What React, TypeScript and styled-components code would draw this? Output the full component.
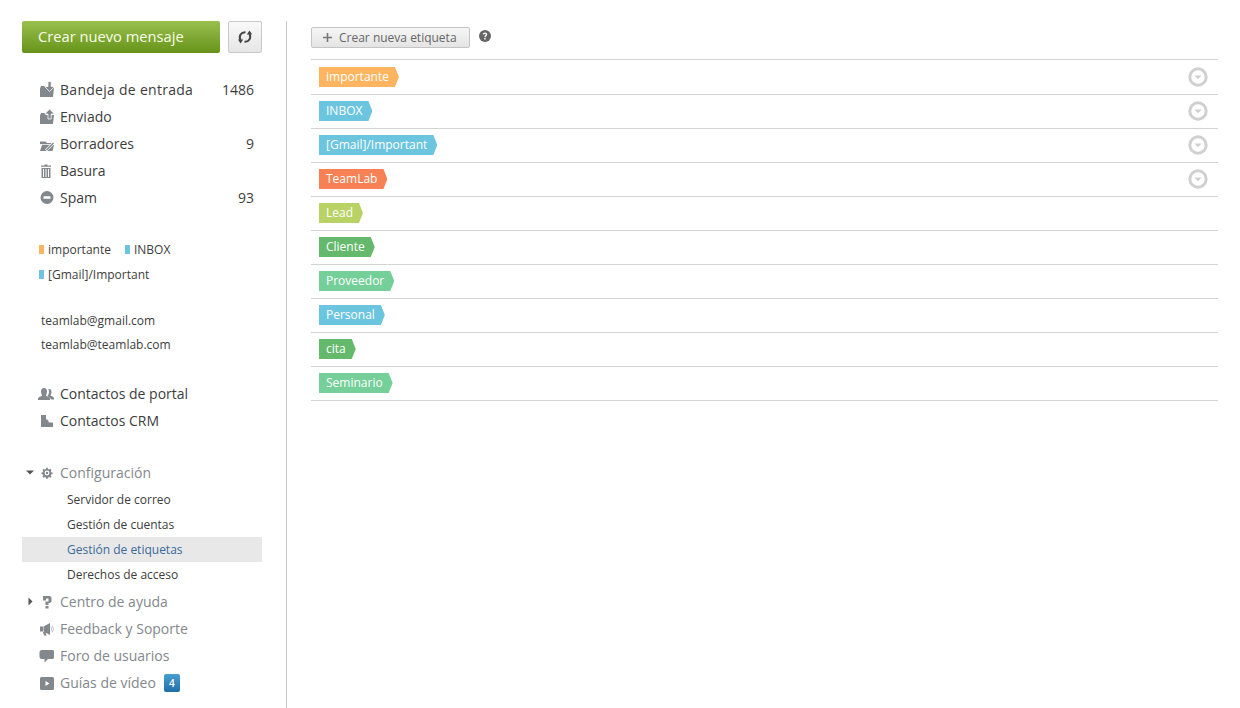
import React from "react";
import styled, { createGlobalStyle } from "styled-components";

const Global = createGlobalStyle`
  html, body { margin: 0; padding: 0; background: #fff; }
  body { font-family: "Open Sans", "Liberation Sans", sans-serif; color: #3d3d3d; }
`;

const Page = styled.div`
  display: flex;
  width: 1240px;
  height: 708px;
  overflow: hidden;
  box-sizing: border-box;
  padding: 21px 22px 0;
`;

const Sidebar = styled.aside`
  width: 240px;
  flex: none;
  display: flex;
  flex-direction: column;
`;

const Divider = styled.div`
  width: 1px;
  flex: none;
  margin: 0 24px;
  background: #c9c9c9;
`;

const Main = styled.main`
  flex: 1;
  min-width: 0;
`;

const Actions = styled.div`
  display: flex;
  gap: 8px;
  margin-bottom: 23px;
`;

const CreateButton = styled.button`
  width: 198px;
  height: 32px;
  border: 0;
  border-radius: 2px;
  padding: 0 0 3px 16px;
  text-align: left;
  color: #fafde8;
  font: 14.7px "Open Sans", sans-serif;
  background: linear-gradient(#99c04f, #669319);
`;

const RefreshButton = styled.button`
  width: 34px;
  height: 32px;
  box-sizing: border-box;
  border: 1px solid #c9c9c9;
  border-radius: 2px;
  padding: 0;
  display: flex;
  align-items: center;
  justify-content: center;
  background: linear-gradient(#f9f9f9, #e6e6e6);
`;

const NavRow = styled.div<{ $muted?: boolean }>`
  position: relative;
  height: 27px;
  display: flex;
  align-items: center;
  padding: 0 8px 0 38px;
  font-size: 14px;
  color: ${(p) => (p.$muted ? "#83888d" : "#3d3d3d")};
`;

const Label = styled.span<{ $spacing?: number }>`
  letter-spacing: ${(p) => p.$spacing ?? 0}px;
`;

const NavIcon = styled.svg`
  position: absolute;
  left: 16px;
  top: 5px;
  width: 16px;
  height: 16px;
  fill: #83888d;
`;

const Count = styled.span`
  margin-left: auto;
  font-size: 14px;
  margin-top: -1px;
`;

const Section = styled.div<{ $top: number }>`
  margin-top: ${(p) => p.$top}px;
`;

const SubList = styled.div`
  padding: 1px 0;
`;

const TagLine = styled.div`
  display: flex;
  height: 25px;
  align-items: center;
  padding-left: 17px;
  gap: 14px;
  font-size: 12px;
`;

const MiniTag = styled.span<{ $color: string }>`
  display: inline-flex;
  align-items: center;
  gap: 4px;
  &::before {
    content: "";
    width: 5px;
    height: 9px;
    background: ${(p) => p.$color};
  }
`;

const Account = styled.div`
  height: 24px;
  line-height: 23px;
  padding-left: 19px;
  font-size: 12px;
`;

const SubItem = styled.div<{ $active?: boolean }>`
  height: 25px;
  line-height: 25px;
  padding-left: 45px;
  font-size: 12px;
  color: ${(p) => (p.$active ? "#3a6a9a" : "#3d3d3d")};
  background: ${(p) => (p.$active ? "#e8e8e8" : "transparent")};
`;

const Caret = styled.svg`
  position: absolute;
  left: 4px;
  top: 9px;
  width: 9px;
  height: 9px;
  fill: #555;
`;

const Badge = styled.span`
  margin-left: 8px;
  width: 16px;
  height: 18px;
  border-radius: 2px;
  display: flex;
  align-items: center;
  justify-content: center;
  font-size: 10px;
  font-weight: 600;
  color: #fff;
  background: linear-gradient(#4a9ed0, #1f6fa8);
`;

const Toolbar = styled.div`
  display: flex;
  align-items: flex-start;
  height: 38px;
  padding-top: 6px;
  box-sizing: border-box;
  gap: 9px;
`;

const NewLabelButton = styled.button`
  width: 159px;
  height: 21px;
  box-sizing: border-box;
  border: 1px solid #c4c4c4;
  border-radius: 2px;
  padding: 0 0 0 11px;
  display: flex;
  align-items: center;
  gap: 7px;
  font: 12px "Open Sans", sans-serif;
  color: #666;
  background: linear-gradient(#f6f6f6, #e4e4e4);
`;

const HelpIcon = styled.svg`
  margin-top: 3px;
`;

const List = styled.div`
  border-top: 1px solid #d4d4d4;
`;

const Row = styled.div`
  display: flex;
  align-items: flex-start;
  justify-content: space-between;
  height: 20px;
  padding: 6px 10px 7px 8px;
  border-bottom: 1px solid #d4d4d4;
  &:first-child {
    padding-top: 7px;
  }
`;

const Tag = styled.span<{ $color: string }>`
  height: 20px;
  line-height: 20px;
  padding: 0 10px 0 7px;
  font-size: 12px;
  color: #fff;
  background: ${(p) => p.$color};
  clip-path: polygon(0 0, calc(100% - 4px) 0, 100% 50%, calc(100% - 4px) 100%, 0 100%);
`;

const Menu = styled.svg`
  width: 20px;
  height: 20px;
  flex: none;
`;

const folder = "M2 7.500L3 5h4l1 2h8l-1 9H2z";

const icons: Record<string, React.ReactNode> = {
  inbox: (
    <>
      <path d={folder} />
      <path d="M10 .500h3.200v5h3.300l-4.900 5-4.900-5H10z" stroke="#fff" strokeWidth=".8" />
    </>
  ),
  sent: (
    <>
      <path d={folder} />
      <path d="M10 11V6H6.700l4.900-5 4.900 5h-3.300v5z" stroke="#fff" strokeWidth=".8" />
    </>
  ),
  drafts: (
    <>
      <path d="M2 9V6.500h5.500L9 8h5v1.200H4z" />
      <path d="M4 10h12l-1.500 6H2z" />
      <path d="M8 15.500l7-7" stroke="#fff" strokeWidth="2.600" fill="none" />
      <path d="M8.500 15l7-7" stroke="#83888d" strokeWidth="1.400" fill="none" />
    </>
  ),
  trash: (
    <path
      d="M6.500 2.500h3v1h3.500v1.200H3V3.500h3.500zM3.500 6h9v10h-9zM5 7v8h1V7zM7.500 7v8h1V7zM10 7v8h1V7z"
      fillRule="evenodd"
    />
  ),
  spam: <path d="M9 2a6.500 6.500 0 1 0 0 13 6.500 6.500 0 0 0 0-13zM5.500 7.300h7v2.400h-7z" fillRule="evenodd" />,
  people: (
    <>
      <path d="M6 3c2 0 3 1.500 3 3.500S8 10 8 10.500s3 1 4 3V15H0v-1.500c1-2 4-2.500 4-3S3 8.500 3 6.500 4 3 6 3z" />
      <path d="M11 4c2 0 2.500 1.500 2.500 3S12.500 10 12.500 10.500s3 .8 3.500 2.500v1.500h-3c-.5-2-3-2.500-3.500-3.500.5-1 1.500-2 1.500-4 0-1-.3-2-.8-2.400z" />
    </>
  ),
  crm: <path d="M3 3h5v4.500h1.500l1.500 3h4V15H3z" />,
  gear: (
    <g transform="translate(9 9) scale(.8) translate(-8 -8)">
      <path
        d="M7 1.500h2l.4 1.700 1.300.5 1.500-.9 1.400 1.400-.9 1.500.5 1.300 1.700.4v2l-1.700.4-.5 1.300.9 1.500-1.400 1.400-1.500-.9-1.300.5-.4 1.700H7l-.4-1.700-1.300-.5-1.500.9-1.400-1.400.9-1.500-.5-1.300-1.700-.4v-2l1.700-.4.5-1.300-.9-1.500 1.400-1.400 1.500.9 1.300-.5zM8 5a3 3 0 1 0 0 6 3 3 0 0 0 0-6zM8 6.500a1.500 1.500 0 1 1 0 3 1.500 1.500 0 0 1 0-3z"
        fillRule="evenodd"
      />
    </g>
  ),
  help: <path d="M5 3h7l1.500 1.500v4L12 10h-1.500v2h-3V8.500H10.500V5.500H8V7.500H5zM7.500 13h3v2.500h-3z" />,
  megaphone: (
    <>
      <path d="M2 6.500h3v5H2zM5.500 6.500L12 3v12l-6.500-3.500zM5 12h2.500l1 3.500H6z" />
      <path d="M13 6.500c1 1.300 1 3.700 0 5l-.5-.5c.8-1.200.8-2.800 0-4zM14.500 5.500c1.500 2 1.500 5 0 7l-.5-.5c1.200-1.800 1.200-4.200 0-6z" opacity=".7" />
    </>
  ),
  bubble: <path d="M4 3h10a2.500 2.500 0 0 1 2.500 2.500v4A2.500 2.500 0 0 1 14 12H10l-3.500 3.500V12H4a2.500 2.500 0 0 1-2.500-2.500v-4A2.500 2.500 0 0 1 4 3z" />,
  video: <path d="M3.500 3h11A1.500 1.500 0 0 1 16 4.500v10a1.500 1.500 0 0 1-1.500 1.500h-11A1.500 1.500 0 0 1 2 14.500v-10A1.500 1.500 0 0 1 3.500 3zM7.500 7v5l4-2.500z" fillRule="evenodd" />,
};

const Item = ({
  icon,
  label,
  count,
  muted,
  caret,
  spacing,
  children,
}: {
  icon: string;
  label: string;
  count?: string;
  muted?: boolean;
  caret?: "down" | "right";
  spacing?: number;
  children?: React.ReactNode;
}) => (
  <NavRow $muted={muted}>
    {caret && (
      <Caret viewBox="0 0 9 9">
        <path d={caret === "down" ? "M0 2.500h8L4 6.500z" : "M2.500 0.500v8l4-4z"} />
      </Caret>
    )}
    <NavIcon viewBox="0 0 16 16">{icons[icon]}</NavIcon>
    <Label $spacing={spacing}>{label}</Label>
    {count && <Count>{count}</Count>}
    {children}
  </NavRow>
);

const labels: [string, string, boolean][] = [
  ["importante", "#ffb45f", true],
  ["INBOX", "#6cc5df", true],
  ["[Gmail]/Important", "#6cc5df", true],
  ["TeamLab", "#f78155", true],
  ["Lead", "#b9d265", false],
  ["Cliente", "#65b96c", false],
  ["Proveedor", "#74cf98", false],
  ["Personal", "#6cc5df", false],
  ["cita", "#65b96c", false],
  ["Seminario", "#74cf98", false],
];

export default function App() {
  return (
    <Page>
      <Global />
      <Sidebar>
        <Actions>
          <CreateButton>Crear nuevo mensaje</CreateButton>
          <RefreshButton aria-label="Actualizar">
            <svg width="16" height="16" viewBox="0 0 16 16" fill="none" stroke="#444" strokeWidth="2">
              <path d="M3.500 11C1.500 7 4 3 8.500 3.200" />
              <path d="M12.500 5C14.500 9 12 13 7.500 12.800" />
              <path d="M9.800 5.500h5.400L12.500 1.500zM1 10.500h5.200L3.500 14.500z" fill="#444" stroke="none" />
            </svg>
          </RefreshButton>
        </Actions>
        <Item icon="inbox" label="Bandeja de entrada" count="1486" spacing={0.28} />
        <Item icon="sent" label="Enviado" />
        <Item icon="drafts" label="Borradores" count="9" />
        <Item icon="trash" label="Basura" />
        <Item icon="spam" label="Spam" count="93" />
        <Section $top={26}>
          <TagLine>
            <MiniTag $color="#ffb45f">importante</MiniTag>
            <MiniTag $color="#6cc5df">INBOX</MiniTag>
          </TagLine>
          <TagLine>
            <MiniTag $color="#6cc5df">[Gmail]/Important</MiniTag>
          </TagLine>
        </Section>
        <Section $top={22}>
          <Account>teamlab@gmail.com</Account>
          <Account>teamlab@teamlab.com</Account>
        </Section>
        <Section $top={23}>
          <Item icon="people" label="Contactos de portal" />
          <Item icon="crm" label="Contactos CRM" />
        </Section>
        <Section $top={25}>
          <Item icon="gear" label="Configuración" muted caret="down" />
          <SubList>
            <SubItem>Servidor de correo</SubItem>
            <SubItem>Gestión de cuentas</SubItem>
            <SubItem $active>Gestión de etiquetas</SubItem>
            <SubItem>Derechos de acceso</SubItem>
          </SubList>
          <Item icon="help" label="Centro de ayuda" muted caret="right" />
          <Item icon="megaphone" label="Feedback y Soporte" muted />
          <Item icon="bubble" label="Foro de usuarios" muted />
          <Item icon="video" label="Guías de vídeo" muted>
            <Badge>4</Badge>
          </Item>
        </Section>
      </Sidebar>
      <Divider />
      <Main>
        <Toolbar>
          <NewLabelButton>
            <svg width="9" height="9" viewBox="0 0 9 9" fill="#777">
              <path d="M3.700 0h1.600v3.700H9v1.600H5.300V9H3.700V5.300H0V3.700h3.700z" />
            </svg>
            Crear nueva etiqueta
          </NewLabelButton>
          <HelpIcon width="12" height="12" viewBox="0 0 12 12">
            <circle cx="6" cy="6" r="6" fill="#666" />
            <path d="M3.800 4.500C3.900 3.200 4.800 2.500 6 2.500c1.300 0 2.200.8 2.200 1.900 0 1.700-1.600 1.500-1.600 2.900H5.300c0-2 1.500-1.900 1.500-2.900 0-.4-.3-.7-.8-.7s-.8.300-.9.800zM5.300 8h1.400v1.400H5.300z" fill="#fff" />
          </HelpIcon>
        </Toolbar>
        <List>
          {labels.map(([name, color, menu]) => (
            <Row key={name}>
              <Tag $color={color}>{name}</Tag>
              {menu && (
                <Menu viewBox="0 0 20 20">
                  <circle cx="10" cy="10" r="8.200" fill="none" stroke="#d0d0d0" strokeWidth="3" />
                  <path d="M6.300 8.500h7.400L10 12.300z" fill="#d0d0d0" />
                </Menu>
              )}
            </Row>
          ))}
        </List>
      </Main>
    </Page>
  );
}
